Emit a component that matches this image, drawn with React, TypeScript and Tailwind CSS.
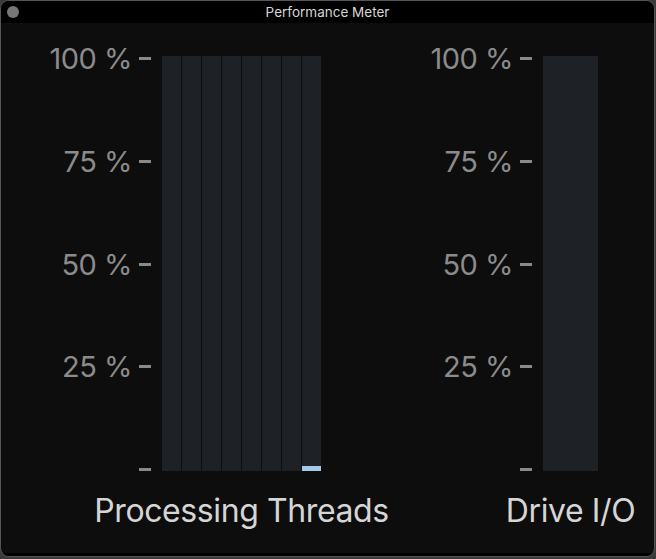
const ticks = ['100 %', '75 %', '50 %', '25 %', ''];

type MeterProps = {
  label: string;
  axisWidth: number;
  columns: number[];
  columnWidth: number;
};

function Meter({ label, axisWidth, columns, columnWidth }: MeterProps) {
  const barsWidth = columns.length * columnWidth + (columns.length - 1);
  return (
    <div className="flex">
      <div className="flex h-[415px] flex-col justify-between pt-[1px]" style={{ width: axisWidth + 33 }}>
        {ticks.map((t, i) => (
          <div key={i} className="flex h-[3px] items-center">
            <span className="flex-1 text-right text-[29px] leading-none tracking-[-0.5px] text-[#8b8b8b]">{t}</span>
            <span className="ml-[7px] h-[3px] w-[12px] bg-[#8a8a8a]" />
            <span className="w-[11px]" />
          </div>
        ))}
      </div>
      <div className="flex flex-col" style={{ width: barsWidth }}>
        <div className="flex h-[415px] gap-[1px]">
          {columns.map((v, i) => (
            <div key={i} className="flex h-full flex-col justify-end bg-[#1e2226]" style={{ width: columnWidth }}>
              {v > 0 && <div className="bg-[#a7c9e9]" style={{ height: v }} />}
            </div>
          ))}
        </div>
        <div className="mt-[24px] flex justify-center whitespace-nowrap text-[32px] leading-none tracking-[-0.4px] text-[#d5d5d5]">
          <span>{label}</span>
        </div>
      </div>
    </div>
  );
}

export default function App() {
  return (
    <div className="h-[559px] w-[656px] bg-[#3b3b3b]" style={{ fontFamily: 'Inter, "Noto Sans", sans-serif' }}>
      <div className="flex h-[557px] w-[655px] flex-col overflow-hidden rounded-[9px] border border-[#555] bg-[#0d0d0d]">
        <div className="relative flex h-[22px] shrink-0 items-center justify-center bg-black">
          <span className="absolute left-[6px] top-[5px] h-[12px] w-[12px] rounded-full bg-[#777]" />
          <span className="text-[13.5px] text-[#d6d6d6]">Performance Meter</span>
        </div>
        <div className="flex flex-1 pt-[33px]">
          <Meter label="Processing Threads" axisWidth={128} columns={[0, 0, 0, 0, 0, 0, 0, 5]} columnWidth={19} />
          <div className="ml-[91px]">
            <Meter label="Drive I/O" axisWidth={98} columns={[0]} columnWidth={55} />
          </div>
        </div>
        <div className="h-[3px] shrink-0 bg-black" />
      </div>
    </div>
  );
}
